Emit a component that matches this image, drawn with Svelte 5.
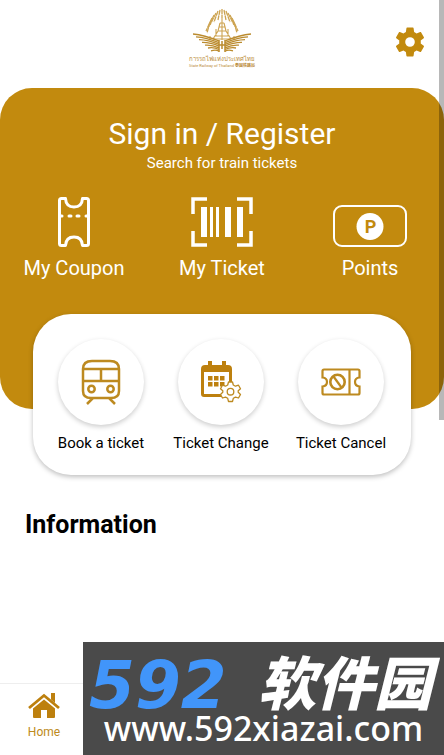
<script>
  const rays = [
    "M30 0V9", "M28 1L26 11", "M32 1L34 11", "M26 2L22 13", "M34 2L38 13",
    "M24 4L18 16", "M36 4L42 16", "M22 6L16 19", "M38 6L44 19",
    "M20 9L14 22", "M40 9L46 22", "M18 13L15 24", "M42 13L45 24"
  ];
  const feathers = [0, 1, 2, 3, 4, 5, 6];
  const bars = [[10, 6], [19, 3], [25, 3], [34, 6], [46, 6]];
  const days = [[8, 16], [14, 16], [20, 16], [8, 22], [14, 22], [20, 22]];
</script>

<div class="page">
  <header>
    <div class="brand">
      <svg class="emblem" viewBox="0 0 60 46" aria-hidden="true">
        <g fill="none" stroke="#cda452">
          {#each rays as d}
            <path {d} stroke-width="1.300" stroke-dasharray="5 0.600" />
          {/each}
          <path d="M30 9V31M28 14H32M27 18H33M26 22H34M23 27H37M21 30H39M28 14L26 22 21 30M32 14L34 22 39 30M24 20V27M36 20V27M18 27V30M42 27V30" stroke-width="1.100" />
        </g>
        <g fill="none" stroke="#bb8b2e" stroke-width="1.300">
          {#each feathers as i}
            <path d="M{1 + i * 3} {25 + i * 2.800}Q{12 + i * 2} {26 + i * 2.400} 27 {32 + i * 1.700}" />
            <path d="M{59 - i * 3} {25 + i * 2.800}Q{48 - i * 2} {26 + i * 2.400} 33 {32 + i * 1.700}" />
          {/each}
          <path d="M27 31V43M33 31V43M27 36H33M30 32V40" stroke-width="1.500" />
        </g>
      </svg>
      <span class="thai">การรถไฟแห่งประเทศไทย</span>
      <span class="english">State Railway of Thailand <b>泰国铁路局</b></span>
    </div>
    <button class="settings" aria-label="Settings">
      <svg viewBox="0 0 24 24" width="36" height="36" aria-hidden="true">
        <path fill="#c28a0e" d="M19.14 12.94c.04-.3.06-.61.06-.94s-.02-.64-.07-.94l2.03-1.58c.18-.14.23-.41.12-.61l-1.92-3.32c-.12-.22-.37-.29-.59-.22l-2.39.96c-.5-.38-1.03-.7-1.62-.94l-.36-2.54c-.04-.24-.24-.41-.48-.41h-3.84c-.24 0-.43.17-.47.41l-.36 2.54c-.59.24-1.13.57-1.62.94l-2.39-.96c-.22-.08-.47 0-.59.22L2.74 8.87c-.12.21-.08.47.12.61l2.03 1.58c-.05.3-.09.63-.09.94s.02.64.07.94l-2.03 1.58c-.18.14-.23.41-.12.61l1.92 3.32c.12.22.37.29.59.22l2.39-.96c.5.38 1.03.7 1.62.94l.36 2.54c.05.24.24.41.48.41h3.84c.24 0 .44-.17.47-.41l.36-2.54c.59-.24 1.13-.56 1.62-.94l2.39.96c.22.08.47 0 .59-.22l1.92-3.32c.12-.22.07-.47-.12-.61zM12 15.200A3.200 3.200 0 1 1 12 8.800a3.200 3.200 0 0 1 0 6.400z" />
      </svg>
    </button>
  </header>

  <main>
    <section class="hero">
      <a class="title" href="#signin">Sign in / Register</a>
      <p>Search for train tickets</p>
      <nav class="shortcuts" aria-label="Account">
        <a href="#coupon">
          <svg width="32" height="50" viewBox="0 0 32 50" fill="none" stroke="#fff" stroke-width="3" stroke-linejoin="round" aria-hidden="true">
            <path d="M3.500 1.500H7.500Q8 10 16 10T24.500 1.500H28.500Q30.500 1.500 30.500 3.500V46.500Q30.500 48.500 28.500 48.500H24.500Q24 40 16 40T7.500 48.500H3.500Q1.500 48.500 1.500 46.500V3.500Q1.500 1.500 3.500 1.500Z" />
            <path d="M3 19H4M11 19H13M19 19H21M28 19H29" stroke-linecap="round" />
          </svg>
          My Coupon
        </a>
        <a href="#ticket">
          <svg width="62" height="50" viewBox="0 0 62 50" aria-hidden="true">
            <path d="M2 17V2H16M46 2H60V17M60 34V48H46M16 48H2V34" fill="none" stroke="#fff" stroke-width="3.500" />
            {#each bars as [x, w]}
              <rect {x} y="10" width={w} height="30" fill="#fff" />
            {/each}
          </svg>
          My Ticket
        </a>
        <a href="#points">
          <svg width="76" height="50" viewBox="0 0 76 50" aria-hidden="true">
            <rect x="2" y="9" width="72" height="40" rx="8" fill="none" stroke="#fff" stroke-width="2" />
            <circle cx="38" cy="29.500" r="13.500" fill="#fff" />
            <text x="38.500" y="36" text-anchor="middle">P</text>
          </svg>
          Points
        </a>
      </nav>
    </section>

    <section class="card">
      <a href="#book">
        <span class="disc">
          <svg width="40" height="46" viewBox="0 0 40 46" fill="none" stroke="#bd8a20" stroke-width="2.500" aria-hidden="true">
            <path d="M11 2H29Q38 2 38 10V32Q38 39 30 39H10Q2 39 2 32V10Q2 2 11 2ZM2 10H38M2 22H38M20 10V22M12 39L6 45M28 39L34 45" />
            <circle cx="10.500" cy="30" r="3.200" /><circle cx="29.500" cy="30" r="3.200" />
          </svg>
        </span>
        Book a ticket
      </a>
      <a href="#change">
        <span class="disc">
          <svg width="42" height="44" viewBox="0 0 42 44" aria-hidden="true">
            <path d="M5 5H28Q32 5 32 9V34Q32 37 29 37H4Q1 37 1 34V9Q1 5 5 5ZM4 12V34H29V12Z" fill="#bd800e" fill-rule="evenodd" />
            <path d="M10 1V8M24 1V8" stroke="#bd800e" stroke-width="4" />
            {#each days as [x, y]}
              <rect {x} {y} width="4.500" height="4.500" fill="#bd800e" />
            {/each}
            <g transform="translate(18.500 19.500)" fill="#fff" stroke="#bd8a20">
              <path d="M10 2.500H14L14.800 5.500 17 6.700 20 5.700 22 9.200 19.700 11.300V12.800L22 15 20 18.500 17 17.600 14.800 18.800 14 22H10L9.200 18.800 7 17.600 4 18.500 2 15 4.300 12.800V11.300L2 9.200 4 5.700 7 6.700 9.200 5.500Z" stroke-width="1.300" stroke-linejoin="round" />
              <circle cx="12" cy="12.200" r="3.300" stroke-width="1.300" />
            </g>
          </svg>
        </span>
        Ticket Change
      </a>
      <a href="#cancel">
        <span class="disc">
          <svg width="40" height="28" viewBox="0 0 40 28" fill="none" stroke="#bd8a20" stroke-width="2.200" aria-hidden="true">
            <path d="M3 1.500H37Q38.500 1.500 38.500 3V9.500Q34 10 34 14T38.500 18.500V25Q38.500 26.500 37 26.500H3Q1.500 26.500 1.500 25V18.500Q6 18 6 14T1.500 9.500V3Q1.500 1.500 3 1.500ZM28.500 1.500V26.500" />
            <circle cx="16.500" cy="14" r="7.200" stroke-width="2.600" /><path d="M12.500 8.500L20.500 19.500" />
          </svg>
        </span>
        Ticket Cancel
      </a>
    </section>

    <h2>Information</h2>
  </main>

  <nav class="tabs" aria-label="Main">
    <a href="#home">
      <svg width="32" height="26" viewBox="0 0 32 26" aria-hidden="true">
        <path d="M1 15L16 2.500 31 15" fill="none" stroke="#bd800e" stroke-width="2.800" />
        <path d="M23 0H27V10L23 6.500ZM16 6.500L27 15.500V24Q27 25 26 25H19V17H13V25H6Q5 25 5 24V15.500Z" fill="#bd800e" />
      </svg>
      Home
    </a>
  </nav>

  <div class="scrollbar"></div>
  <aside class="watermark">
    <div class="name"><span class="digits">592</span><span>软件园</span></div>
    <div class="site">www.592xiazai.com</div>
  </aside>
</div>

<style>
  :global(body) { margin: 0; background: #fff; }
  .page {
    position: relative;
    display: flex;
    flex-direction: column;
    min-height: 100vh;
    overflow: hidden;
    font-family: Roboto, "Noto Sans CJK SC", sans-serif;
    color: #000;
  }
  a { color: inherit; text-decoration: none; }
  svg { display: block; flex: none; }
  header {
    display: grid;
    grid-template-columns: 1fr auto 1fr;
    height: 88px;
  }
  .brand {
    grid-column: 2;
    display: flex;
    flex-direction: column;
    align-items: center;
    padding-top: 9px;
    color: #b98a35;
    white-space: nowrap;
  }
  .emblem { width: 60px; height: 46px; }
  .thai { font-size: 6px; line-height: 8px; font-weight: 500; }
  .english { font-size: 4px; line-height: 5px; }
  .settings {
    justify-self: end;
    align-self: start;
    margin: 24px 16px 0 0;
    padding: 0;
    border: 0;
    background: none;
  }
  .hero {
    display: flex;
    flex-direction: column;
    align-items: center;
    padding: 28px 0 129px;
    border-radius: 32px;
    background: #c28a0e;
    color: #fff;
  }
  .title { font-size: 30px; line-height: 36px; }
  p { margin: 1px 0 24px; font-size: 15px; line-height: 20px; }
  .shortcuts {
    display: grid;
    grid-template-columns: repeat(3, 1fr);
    width: 100%;
    font-size: 20px;
    line-height: 24px;
  }
  .shortcuts a {
    display: flex;
    flex-direction: column;
    align-items: center;
    gap: 9px;
  }
  .shortcuts text { font: 700 18px Roboto, sans-serif; fill: #c28a0e; }
  .card {
    display: grid;
    grid-template-columns: repeat(3, 1fr);
    box-sizing: border-box;
    margin: -95px 33px 0;
    padding: 25px 10px 22px 8px;
    border-radius: 38px;
    background: #fff;
    box-shadow: 0 2px 5px rgba(0, 0, 0, 0.25);
    font-size: 15px;
    line-height: 20px;
    white-space: nowrap;
  }
  .card a {
    display: flex;
    flex-direction: column;
    align-items: center;
    gap: 8px;
  }
  .disc {
    display: grid;
    place-items: center;
    width: 86px;
    height: 86px;
    border-radius: 50%;
    background: #fff;
    box-shadow: 0 2px 5px rgba(0, 0, 0, 0.2);
  }
  h2 { margin: 35px 25px; font-size: 25px; line-height: 30px; }
  .tabs {
    margin-top: auto;
    height: 71px;
    border-top: 1px solid #eee;
    color: #bd8a20;
    font-size: 12px;
    line-height: 16px;
  }
  .tabs a {
    display: flex;
    flex-direction: column;
    align-items: center;
    gap: 5px;
    width: 88px;
    padding-top: 9px;
  }
  .scrollbar {
    position: absolute;
    top: 0;
    right: 0;
    width: 5px;
    height: 420px;
    background: rgba(0, 0, 0, 0.28);
  }
  .watermark {
    position: absolute;
    right: 0;
    bottom: 0;
    left: 83px;
    box-sizing: border-box;
    height: 113px;
    padding-top: 8px;
    background: #4a4a4a;
    color: #fff;
    text-align: center;
    white-space: nowrap;
  }
  .name {
    display: flex;
    justify-content: space-between;
    height: 64px;
    padding: 0 12px 0 6px;
    font: italic 900 58px/60px "Noto Sans CJK SC", sans-serif;
  }
  .digits {
    font-family: "DejaVu Sans", sans-serif;
    font-size: 66px;
    line-height: 72px;
    font-weight: 700;
    color: #4195fa;
  }
  .site { font: 500 34px/28px "Noto Sans", sans-serif; }
</style>
